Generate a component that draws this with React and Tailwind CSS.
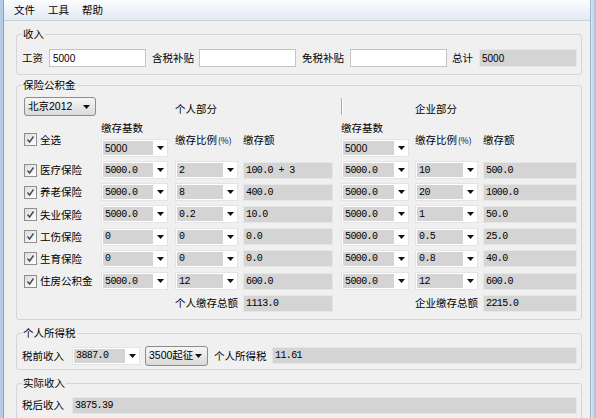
import React from "react";

const CJK = "font-['Noto_Sans_CJK_SC','Noto_Sans',sans-serif]";
const SANS = "font-['Liberation_Sans','Noto_Sans_CJK_SC',sans-serif]";
const MONO = "font-['Liberation_Mono','Noto_Sans_CJK_SC',monospace]";
const COLS = "grid grid-cols-[77px_74px_68px_98px_74px_68px_94px]";

function Arrow() {
  return (
    <svg width="7" height="4" viewBox="0 0 7 4">
      <path d="M0 0h7L3.5 4z" fill="#111" />
    </svg>
  );
}

function Combo({ value, w, mono = true }) {
  return (
    <div className={`flex h-[18px] border border-[#e4e4e4] bg-white ${w}`}>
      <div
        className={`flex-1 m-[1px] bg-[#d4d4d4] pl-[2px] flex items-center text-[10px] ${
          mono ? MONO + " tracking-[-0.6px]" : SANS
        }`}
      >
        {value}
      </div>
      <div className="w-[13px] flex items-center justify-center">
        <Arrow />
      </div>
    </div>
  );
}

function ReadBox({ value, w, mono = true }) {
  return (
    <div
      className={`h-[17px] bg-[#d4d4d4] border border-[#e6e6e6] flex items-center pl-[2px] text-[10px] ${
        mono ? MONO + " tracking-[-0.6px]" : SANS
      } ${w}`}
    >
      {value}
    </div>
  );
}

function BtnCombo({ value, w }) {
  return (
    <div
      className={`h-[19px] rounded-[3px] border border-[#8c8c8c] bg-linear-to-b from-[#f6f6f6] to-[#dadada] flex items-center pl-[3px] pr-[5px] text-[10.5px] ${SANS} ${w}`}
    >
      <span className="flex-1 whitespace-nowrap">{value}</span>
      <Arrow />
    </div>
  );
}

function Check() {
  return (
    <div className="w-[13px] h-[13px] border border-[#8e8f8f] bg-linear-to-br from-[#dcdcdc] to-[#ffffff] flex items-center justify-center shrink-0">
      <svg width="9" height="9" viewBox="0 0 9 9">
        <path d="M1.5 4.5 L3.6 7 L7.5 1.5" stroke="#3b4a66" strokeWidth="1.4" fill="none" />
      </svg>
    </div>
  );
}

function Group({ title, className = "", children }) {
  return (
    <fieldset
      className={`w-[566px] ml-[12px] border border-[#d5d5d5] rounded-[3px] pl-[5px] pr-[4px] ${className}`}
    >
      <legend className="px-[1px] text-[10.5px] leading-[14px]">{title}</legend>
      {children}
    </fieldset>
  );
}

const rows = [
  ["医疗保险", "5000.0", "2", "100.0 + 3", "5000.0", "10", "500.0"],
  ["养老保险", "5000.0", "8", "400.0", "5000.0", "20", "1000.0"],
  ["失业保险", "5000.0", "0.2", "10.0", "5000.0", "1", "50.0"],
  ["工伤保险", "0", "0", "0.0", "5000.0", "0.5", "25.0"],
  ["生育保险", "0", "0", "0.0", "5000.0", "0.8", "40.0"],
  ["住房公积金", "5000.0", "12", "600.0", "5000.0", "12", "600.0"],
];

function Ratio() {
  return (
    <span className="whitespace-nowrap">
      缴存比例<span className="text-[8.5px] ml-[1px]">(%)</span>
    </span>
  );
}

export default function App() {
  return (
    <div className={`flex w-[596px] h-[418px] overflow-hidden bg-[#f0f0f0] text-black ${CJK}`}>
      <div className="w-[4px] bg-[#b4cce6] border-r border-[#86a3c4]" />
      <div className="flex-1 flex flex-col">
        {/* menu */}
        <div className="h-[21px] shrink-0 flex items-center gap-[13px] pl-[10px] text-[10.5px] bg-linear-to-b from-[#fbfcfe] to-[#e3eaf3] border-b border-[#c7d2df]">
          <span>文件</span>
          <span>工具</span>
          <span>帮助</span>
        </div>

        {/* 收入 */}
        <Group title="收入" className="mt-[6px] pb-[7px]">
          <div className="flex items-center h-[18px] mt-[8px] text-[10.5px]">
            <span className="w-[27px]">工资</span>
            <div className={`w-[97px] h-[18px] bg-white border border-[#c4c4c4] flex items-center pl-[3px] text-[10px] ${SANS}`}>
              5000
            </div>
            <span className="w-[53px] pl-[6px] whitespace-nowrap">含税补贴</span>
            <div className="w-[97px] h-[18px] bg-white border border-[#c4c4c4]" />
            <span className="w-[54px] pl-[6px] whitespace-nowrap">免税补贴</span>
            <div className="w-[97px] h-[18px] bg-white border border-[#c4c4c4]" />
            <span className="w-[32px] pl-[5px] whitespace-nowrap">总计</span>
            <ReadBox value="5000" w="w-[98px] h-[18px]" mono={false} />
          </div>
        </Group>

        {/* 保险公积金 */}
        <Group title="保险公积金" className="mt-[3px] pb-[5px]">
          <div className="ml-[2px] mt-[5px] text-[10.5px]">
            <div className={`${COLS} h-[19px]`}>
              <BtnCombo value="北京2012" w="w-[72px]" />
              <div />
              <span className="self-end leading-[14px] whitespace-nowrap">个人部分</span>
              <div />
              <div className="self-center h-[17px] w-[2px] border-l border-l-[#aaaaaa] border-r border-r-white" />
              <span className="self-end leading-[14px] whitespace-nowrap">企业部分</span>
              <div />
            </div>
            <div className={`${COLS} h-[39px] mt-[4px]`}>
              <div className="flex items-center">
                <Check />
                <span className="ml-[3px]">全选</span>
              </div>
              <div className="flex flex-col">
                <span className="leading-[16px]">缴存基数</span>
                <div className="mt-[3px]">
                  <Combo value="5000" w="w-[67px]" mono={false} />
                </div>
              </div>
              <div className="flex items-center">
                <Ratio />
              </div>
              <div className="flex items-center">缴存额</div>
              <div className="flex flex-col">
                <span className="leading-[16px]">缴存基数</span>
                <div className="mt-[3px]">
                  <Combo value="5000" w="w-[68px]" mono={false} />
                </div>
              </div>
              <div className="flex items-center">
                <Ratio />
              </div>
              <div className="flex items-center">缴存额</div>
            </div>
            {rows.map((r) => (
              <div key={r[0]} className={`${COLS} h-[22.2px] items-center`}>
                <div className="flex items-center">
                  <Check />
                  <span className="ml-[3px] whitespace-nowrap">{r[0]}</span>
                </div>
                <Combo value={r[1]} w="w-[67px]" />
                <Combo value={r[2]} w="w-[63px]" />
                <ReadBox value={r[3]} w="w-[90px]" />
                <Combo value={r[4]} w="w-[68px]" />
                <Combo value={r[5]} w="w-[63px]" />
                <ReadBox value={r[6]} w="w-[94px]" />
              </div>
            ))}
            <div className={`${COLS} h-[22px] items-center`}>
              <div />
              <div />
              <span className="whitespace-nowrap">个人缴存总额</span>
              <ReadBox value="1113.0" w="w-[90px]" />
              <div />
              <span className="whitespace-nowrap">企业缴存总额</span>
              <ReadBox value="2215.0" w="w-[94px]" />
            </div>
          </div>
        </Group>

        {/* 个人所得税 */}
        <Group title="个人所得税" className="mt-[6px] pb-[4px]">
          <div className="flex items-center h-[19px] mt-[6px] text-[10.5px]">
            <span className="w-[50px] whitespace-nowrap">税前收入</span>
            <Combo value="3887.0" w="w-[68px]" />
            <div className="ml-[5px]">
              <BtnCombo value="3500起征" w="w-[63px] h-[20px]" />
            </div>
            <span className="w-[64px] pl-[6px] whitespace-nowrap">个人所得税</span>
            <ReadBox value="11.61" w="w-[305px]" />
          </div>
        </Group>

        {/* 实际收入 */}
        <Group title="实际收入" className="mt-[6px] pb-[8px]">
          <div className="flex items-center h-[16px] mt-[7px] text-[10.5px]">
            <span className="w-[50px] whitespace-nowrap">税后收入</span>
            <ReadBox value="3875.39" w="w-[505px]" />
          </div>
        </Group>
      </div>
      <div className="w-[6px] bg-linear-to-r from-[#dde7f3] to-[#a9c0dc] border-l border-[#9fb2c8]" />
    </div>
  );
}
